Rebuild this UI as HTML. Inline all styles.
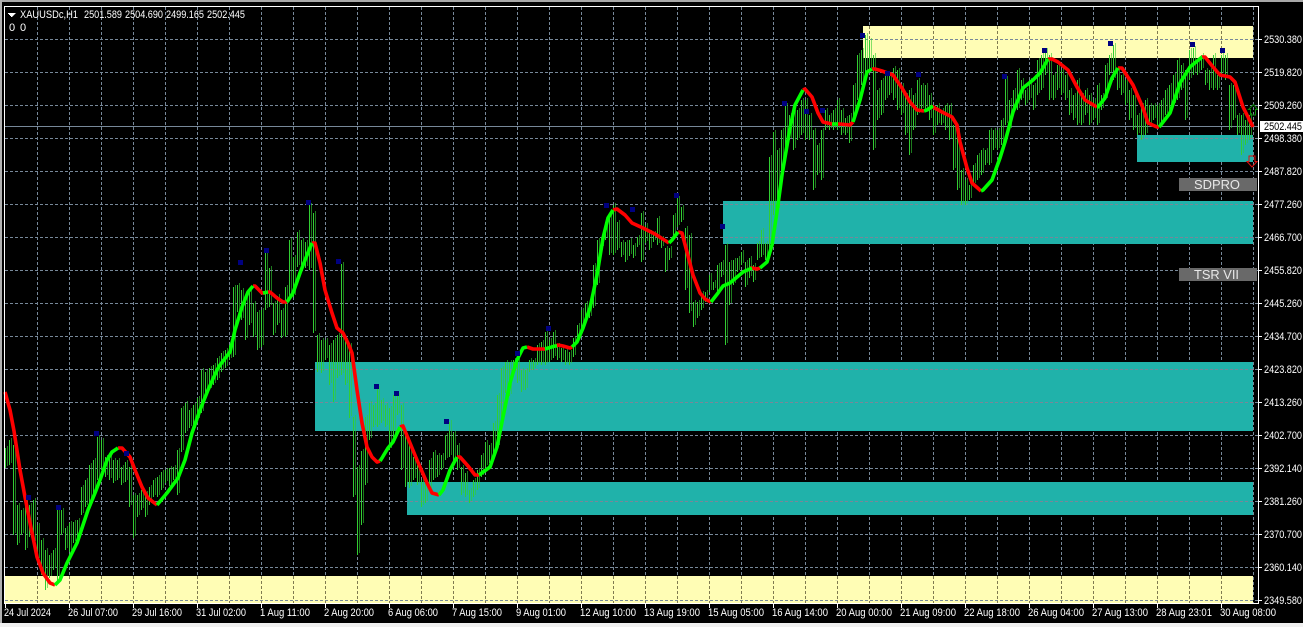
<!DOCTYPE html>
<html><head><meta charset="utf-8"><title>XAUUSDc,H1</title>
<style>
html,body{margin:0;padding:0;background:#000;width:1303px;height:627px;overflow:hidden}
svg{display:block}
text{font-family:"Liberation Sans",sans-serif;font-size:11px;fill:#fff}
</style></head><body>
<svg width="1303" height="627" viewBox="0 0 1303 627" xmlns="http://www.w3.org/2000/svg">
<rect width="1303" height="627" fill="#000"/>
<rect width="1303" height="2" fill="#a8a8a8"/>
<rect width="2" height="627" fill="#b0b0b0"/>
<rect y="623" width="1303" height="4" fill="#f0f0f0"/>

<g shape-rendering="crispEdges">
<path fill="none" stroke="#778899" stroke-dasharray="3 2" d="M37.5 7V603M69.5 7V603M101.5 7V603M133.5 7V603M165.5 7V603M197.5 7V603M229.5 7V603M261.5 7V603M293.5 7V603M325.5 7V603M357.5 7V603M389.5 7V603M421.5 7V603M453.5 7V603M485.5 7V603M517.5 7V603M549.5 7V603M581.5 7V603M613.5 7V603M645.5 7V603M677.5 7V603M709.5 7V603M741.5 7V603M773.5 7V603M805.5 7V603M837.5 7V603M869.5 7V603M901.5 7V603M933.5 7V603M965.5 7V603M997.5 7V603M1029.5 7V603M1061.5 7V603M1093.5 7V603M1125.5 7V603M1157.5 7V603M1189.5 7V603M1221.5 7V603M1253.5 7V603"/>
<rect x="315" y="362" width="938" height="69" fill="#20b2aa"/>
<rect x="407" y="482" width="846" height="33" fill="#20b2aa"/>
<rect x="723" y="201" width="530" height="43" fill="#20b2aa"/>
<rect x="1137" y="135" width="116" height="27" fill="#20b2aa"/>
<rect x="863" y="26" width="390" height="32" fill="#fffdb5"/>
<rect x="5" y="576" width="1248" height="27" fill="#fffdb5"/>
<path fill="none" stroke="#807a50" stroke-dasharray="3 2" d="M869.5 26V58M901.5 26V58M933.5 26V58M965.5 26V58M997.5 26V58M1029.5 26V58M1061.5 26V58M1093.5 26V58M1125.5 26V58M1157.5 26V58M1189.5 26V58M1221.5 26V58M37.5 576V603M69.5 576V603M101.5 576V603M133.5 576V603M165.5 576V603M197.5 576V603M229.5 576V603M261.5 576V603M293.5 576V603M325.5 576V603M357.5 576V603M389.5 576V603M421.5 576V603M453.5 576V603M485.5 576V603M517.5 576V603M549.5 576V603M581.5 576V603M613.5 576V603M645.5 576V603M677.5 576V603M709.5 576V603M741.5 576V603M773.5 576V603M805.5 576V603M837.5 576V603M869.5 576V603M901.5 576V603M933.5 576V603M965.5 576V603M997.5 576V603M1029.5 576V603M1061.5 576V603M1093.5 576V603M1125.5 576V603M1157.5 576V603M1189.5 576V603M1221.5 576V603"/>
<path fill="none" stroke="#778899" stroke-dasharray="3 2" d="M5 39.5H1258M5 72.5H1258M5 105.5H1258M5 138.5H1258M5 171.5H1258M5 204.5H1258M5 237.5H1258M5 270.5H1258M5 303.5H1258M5 336.5H1258M5 369.5H1258M5 402.5H1258M5 435.5H1258M5 468.5H1258M5 501.5H1258M5 534.5H1258M5 567.5H1258M5 600.5H1258"/>
<path fill="none" stroke="#778899" d="M5 126.5H1258"/>

<g transform="translate(.5 0)">
<path id="b" fill="none" stroke="#32cd32" d="M5 448V468M9 440V465M13 445V535M17 505V545M21 510V535M25 500V550M29 505V537M33 500V543M37 525V560M41 540V575M45 550V590M49 555V578M53 550V570M57 510V582M61 510V535M65 528V550M69 523V552M73 522V543M77 520V540M81 487V515M85 480V507M89 465V503M93 460V495M97 437V480M101 440V470M105 457V477M109 455V480M113 460V483M117 460V480M121 467V485M125 462V482M129 467V507M133 495V538M137 495V517M141 490V510M145 493V517M149 487V505M153 480V497M157 477V497M161 472V490M165 470V483M169 468V486M173 467V480M177 450V495M181 408V452M185 403V433M189 410V428M193 405V430M197 398V420M201 370V413M205 372V397M209 368V390M213 365V385M217 358V380M221 353V372M225 350V368M229 345V360M233 287V357M237 285V312M241 290V320M245 298V340M249 290V325M253 303V337M257 312V350M261 310V347M265 253V310M269 268V307M273 303V335M277 296V325M281 310V338M285 287V337M289 240V300M293 257V297M297 232V267M301 240V265M305 242V268M309 205V270M313 213V333M317 335V372M321 340V373M325 340V360M329 345V385M333 340V402M337 335V378M341 264V375M345 340V385M349 345V418M353 417V497M357 467V555M361 451V525M365 417V485M369 403V440M373 405V427M377 388V427M381 400V423M385 405V427M389 408V450M393 395V437M397 395V415M401 405V470M405 435V487M409 445V488M413 457V480M417 465V485M421 480V507M425 483V503M429 460V490M433 452V480M437 455V477M441 455V470M445 435V460M449 422V457M453 433V463M457 445V470M461 467V495M465 473V497M469 490V503M473 480V497M477 470V490M481 455V477M485 442V467M489 445V463M493 423V457M497 395V447M501 368V417M505 362V393M509 362V396M513 360V373M517 360V383M521 370V392M525 370V390M529 360V372M533 360V370M537 345V365M541 342V365M545 332V365M549 340V362M553 332V358M557 345V360M561 348V362M565 350V365M569 352V365M573 338V357M577 325V340M581 310V330M585 303V320M589 305V318M593 265V308M597 240V285M601 238V248M605 222V240M609 215V255M613 205V255M617 222V250M621 242V257M625 242V262M629 240V256M633 245V258M637 237V247M641 213V262M645 225V243M649 232V250M653 233V242M657 218V245M661 238V248M665 248V272M669 248V260M673 215V240M677 198V227M681 207V222M685 228V290M689 235V313M693 302V327M697 302V318M701 293V310M705 292V302M709 275V292M713 282V290M717 265V292M721 262V277M725 245V345M729 262V305M733 260V285M737 258V272M741 252V265M745 262V287M749 258V278M753 265V282M757 243V260M761 230V257M765 243V260M769 157V250M773 132V215M777 150V210M781 130V170M785 105V150M789 115V140M793 112V150M797 110V140M801 100V135M805 100V140M809 115V140M813 130V190M817 145V175M821 130V180M825 110V130M829 115V130M833 110V130M837 100V130M841 110V135M845 118V135M849 115V143M853 85V120M857 55V100M861 50V85M865 35V75M869 40V70M873 55V150M877 90V120M881 80V115M885 75V100M889 75V95M893 68V100M897 70V110M901 85V115M905 95V135M909 90V155M913 95V130M917 80V115M921 85V110M925 85V110M929 95V120M933 110V135M937 105V125M941 110V125M945 105V130M949 105V140M953 125V170M957 130V190M961 170V205M965 180V205M969 185V200M973 165V185M977 155V180M981 150V175M985 150V165M989 130V165M993 130V150M997 130V150M1001 120V145M1005 78V125M1009 100V130M1013 90V110M1017 70V110M1021 80V100M1025 90V105M1029 80V100M1033 85V110M1037 60V95M1041 55V90M1045 50V75M1049 55V100M1053 75V100M1057 65V90M1061 70V95M1065 75V100M1069 90V115M1073 95V120M1077 80V125M1081 95V125M1085 90V115M1089 95V125M1093 100V120M1097 85V125M1101 95V110M1105 65V100M1109 55V75M1113 45V80M1117 70V90M1121 75V95M1125 80V105M1129 90V120M1133 95V130M1137 115V135M1141 105V140M1145 100V135M1149 105V125M1153 105V120M1157 105V127M1161 100V125M1165 90V115M1169 85V115M1173 75V105M1177 60V100M1181 65V90M1185 70V120M1189 50V80M1193 48V75M1197 60V75M1201 55V70M1205 70V85M1209 70V90M1213 55V90M1217 75V90M1221 55V75M1225 55V80M1229 85V130M1233 85V120M1237 115V135M1241 115V155M1245 120V145M1249 115V140"/>
<use href="#b" x="2" y="-2" opacity=".6"/>
</g>
</g>

<g fill="none" stroke-width="3.6" stroke-linejoin="round" stroke-linecap="butt">
<g stroke="#ff0000">
<polyline points="5,392 10,410 14,431 20,470 25,497 31,528 35,547 37,557 43,573 50,583 55,585"/>
<polyline points="118,448 122,448 130,457 135,470 142,487 148,498 157,505"/>
<polyline points="253,286 255,286 262,293 265,293"/>
<polyline points="268,292 270,292 277,298 283,302 287,302"/>
<polyline points="312,243 315,243 320,263 325,290 332,313 337,328 343,333 348,343 352,353 357,390 362,423 367,447 372,457 377,462 380,461"/>
<polyline points="400,427 403,426 410,443 417,460 427,483 432,493 439,495"/>
<polyline points="457,457 460,457 468,466 475,475 479,475"/>
<polyline points="527,347 533,349 545,349"/>
<polyline points="556,346 558,345 563,346 570,348 572,347"/>
<polyline points="613,210 617,209 625,215 632,223 643,228 655,234 669,243"/>
<polyline points="678,232 682,233 687,252 693,275 700,293 705,299 711,302"/>
<polyline points="750,268 752,268 757,269 760,268"/>
<polyline points="803,90 805,89 812,97 818,113 823,122 832,124 834,124"/>
<polyline points="838,124 840,124 850,125 853,122"/>
<polyline points="872,69 875,69 882,71 893,75 902,88 910,102 917,110 924,111"/>
<polyline points="932,106 933,107 942,112 952,117 957,125 960,142 967,168 972,183 981,191"/>
<polyline points="1048,59 1052,59 1058,62 1068,70 1077,87 1085,100 1097,107"/>
<polyline points="1118,68 1122,68 1133,85 1143,108 1148,123 1157,127 1159,127"/>
<polyline points="1202,57 1205,57 1213,67 1220,75 1230,77 1235,82 1243,107 1253,127"/>
</g>
<g stroke="#00ff00">
<polyline points="55,585 60,580 67,563 77,543 88,510 95,493 100,480 107,460 112,452 118,448"/>
<polyline points="157,505 167,493 178,478 185,460 192,433 200,410 208,390 217,370 220,365 230,352 235,330 242,307 248,292 253,286"/>
<polyline points="263,293 268,292"/>
<polyline points="287,302 293,293 300,273 307,255 312,243"/>
<polyline points="380,461 382,458 388,448 393,442 400,427"/>
<polyline points="439,495 443,490 450,470 457,457"/>
<polyline points="479,475 490,467 497,447 503,417 510,383 517,360 523,348 527,347"/>
<polyline points="545,349 555,346 557,346"/>
<polyline points="572,347 577,342 583,328 590,308 597,275 603,238 608,218 613,210"/>
<polyline points="669,243 672,240 678,232"/>
<polyline points="711,302 718,293 723,286 730,283 743,272 752,268"/>
<polyline points="760,268 767,262 772,245 775,225 777,212 782,175 790,128 795,105 803,90"/>
<polyline points="832,124 838,124"/>
<polyline points="853,122 860,100 867,72 872,69"/>
<polyline points="924,111 927,110 933,106"/>
<polyline points="981,191 983,190 992,180 1000,158 1005,142 1013,112 1023,88 1033,80 1040,73 1048,59"/>
<polyline points="1097,107 1098,107 1105,98 1112,78 1118,68"/>
<polyline points="1159,127 1160,126 1170,113 1180,83 1190,67 1202,57"/>
</g>
</g>

<g fill="#000080" shape-rendering="crispEdges">
<rect x="26" y="495" width="5" height="5"/><rect x="56" y="505" width="5" height="5"/><rect x="94" y="431" width="5" height="5"/><rect x="124" y="451" width="5" height="5"/>
<rect x="238" y="260" width="5" height="5"/><rect x="264" y="248" width="5" height="5"/><rect x="306" y="200" width="5" height="5"/><rect x="336" y="259" width="5" height="5"/>
<rect x="374" y="384" width="5" height="5"/><rect x="394" y="391" width="5" height="5"/><rect x="444" y="419" width="5" height="5"/><rect x="515" y="351" width="5" height="5"/>
<rect x="546" y="326" width="5" height="5"/><rect x="604" y="203" width="5" height="5"/><rect x="630" y="207" width="5" height="5"/><rect x="674" y="193" width="5" height="5"/><rect x="720" y="224" width="5" height="5"/>
<rect x="782" y="101" width="5" height="5"/><rect x="804" y="109" width="5" height="5"/><rect x="820" y="108" width="5" height="5"/><rect x="860" y="33" width="5" height="5"/><rect x="885" y="71" width="5" height="5"/><rect x="916" y="72" width="5" height="5"/><rect x="1002" y="74" width="5" height="5"/>
<rect x="1042" y="48" width="5" height="5"/><rect x="1108" y="41" width="5" height="5"/><rect x="1190" y="42" width="5" height="5"/><rect x="1220" y="48" width="5" height="5"/>
</g>

<path d="M1253.5 104.5L1257.5 109.5H1255.5V115H1250.5V109.5H1248.5Z" fill="none" stroke="#0a8a0a"/>
<path d="M1252 167L1257 161.5H1255V156H1249V161.5H1247Z" fill="none" stroke="#e01010"/>

<g shape-rendering="crispEdges">
<path fill="none" stroke="#fff" d="M4 6.5H1258.5V603.5H4.5V6M1258 39.5H1262M1258 72.5H1262M1258 105.5H1262M1258 138.5H1262M1258 171.5H1262M1258 204.5H1262M1258 237.5H1262M1258 270.5H1262M1258 303.5H1262M1258 336.5H1262M1258 369.5H1262M1258 402.5H1262M1258 435.5H1262M1258 468.5H1262M1258 501.5H1262M1258 534.5H1262M1258 567.5H1262M1258 600.5H1262M5.5 604V608M69.5 604V608M133.5 604V608M197.5 604V608M261.5 604V608M325.5 604V608M389.5 604V608M453.5 604V608M517.5 604V608M581.5 604V608M645.5 604V608M709.5 604V608M773.5 604V608M837.5 604V608M901.5 604V608M965.5 604V608M1029.5 604V608M1093.5 604V608M1157.5 604V608M1221.5 604V608"/>
<rect x="1260" y="121" width="43" height="11" fill="#fff"/>
<rect x="1179" y="178" width="78" height="13" fill="#696969"/>
<rect x="1179" y="268" width="78" height="13" fill="#696969"/>
<path d="M8 13H15.5V14H14.5V15H13.5V16H12.5V17H11V16H10V15H9V14H8Z" fill="#fff"/>
</g>

<text x="20" y="18" textLength="58" lengthAdjust="spacingAndGlyphs">XAUUSDc,H1</text>
<text x="84" y="18" textLength="38" lengthAdjust="spacingAndGlyphs">2501.589</text>
<text x="125" y="18" textLength="38" lengthAdjust="spacingAndGlyphs">2504.690</text>
<text x="166" y="18" textLength="38" lengthAdjust="spacingAndGlyphs">2499.165</text>
<text x="207" y="18" textLength="38" lengthAdjust="spacingAndGlyphs">2502.445</text>
<text x="9" y="31">0</text><text x="20" y="31">0</text>

<g>
<text x="1264" y="43" textLength="38" lengthAdjust="spacingAndGlyphs">2530.380</text>
<text x="1264" y="76" textLength="38" lengthAdjust="spacingAndGlyphs">2519.820</text>
<text x="1264" y="109" textLength="38" lengthAdjust="spacingAndGlyphs">2509.260</text>
<text x="1264" y="130" textLength="38" lengthAdjust="spacingAndGlyphs" style="fill:#000">2502.445</text>
<text x="1264" y="142" textLength="38" lengthAdjust="spacingAndGlyphs">2498.380</text>
<text x="1264" y="175" textLength="38" lengthAdjust="spacingAndGlyphs">2487.820</text>
<text x="1264" y="208" textLength="38" lengthAdjust="spacingAndGlyphs">2477.260</text>
<text x="1264" y="241" textLength="38" lengthAdjust="spacingAndGlyphs">2466.700</text>
<text x="1264" y="274" textLength="38" lengthAdjust="spacingAndGlyphs">2455.820</text>
<text x="1264" y="307" textLength="38" lengthAdjust="spacingAndGlyphs">2445.260</text>
<text x="1264" y="340" textLength="38" lengthAdjust="spacingAndGlyphs">2434.700</text>
<text x="1264" y="373" textLength="38" lengthAdjust="spacingAndGlyphs">2423.820</text>
<text x="1264" y="406" textLength="38" lengthAdjust="spacingAndGlyphs">2413.260</text>
<text x="1264" y="439" textLength="38" lengthAdjust="spacingAndGlyphs">2402.700</text>
<text x="1264" y="472" textLength="38" lengthAdjust="spacingAndGlyphs">2392.140</text>
<text x="1264" y="505" textLength="38" lengthAdjust="spacingAndGlyphs">2381.260</text>
<text x="1264" y="538" textLength="38" lengthAdjust="spacingAndGlyphs">2370.700</text>
<text x="1264" y="571" textLength="38" lengthAdjust="spacingAndGlyphs">2360.140</text>
<text x="1264" y="604" textLength="38" lengthAdjust="spacingAndGlyphs">2349.580</text>
</g>

<g>
<text x="4" y="616" textLength="47" lengthAdjust="spacingAndGlyphs">24 Jul 2024</text>
<text x="68" y="616" textLength="50" lengthAdjust="spacingAndGlyphs">26 Jul 07:00</text>
<text x="132" y="616" textLength="50" lengthAdjust="spacingAndGlyphs">29 Jul 16:00</text>
<text x="196" y="616" textLength="50" lengthAdjust="spacingAndGlyphs">31 Jul 02:00</text>
<text x="260" y="616" textLength="50" lengthAdjust="spacingAndGlyphs">1 Aug 11:00</text>
<text x="324" y="616" textLength="50" lengthAdjust="spacingAndGlyphs">2 Aug 20:00</text>
<text x="388" y="616" textLength="50" lengthAdjust="spacingAndGlyphs">6 Aug 06:00</text>
<text x="452" y="616" textLength="50" lengthAdjust="spacingAndGlyphs">7 Aug 15:00</text>
<text x="516" y="616" textLength="50" lengthAdjust="spacingAndGlyphs">9 Aug 01:00</text>
<text x="580" y="616" textLength="56" lengthAdjust="spacingAndGlyphs">12 Aug 10:00</text>
<text x="644" y="616" textLength="56" lengthAdjust="spacingAndGlyphs">13 Aug 19:00</text>
<text x="708" y="616" textLength="56" lengthAdjust="spacingAndGlyphs">15 Aug 05:00</text>
<text x="772" y="616" textLength="56" lengthAdjust="spacingAndGlyphs">16 Aug 14:00</text>
<text x="836" y="616" textLength="56" lengthAdjust="spacingAndGlyphs">20 Aug 00:00</text>
<text x="900" y="616" textLength="56" lengthAdjust="spacingAndGlyphs">21 Aug 09:00</text>
<text x="964" y="616" textLength="56" lengthAdjust="spacingAndGlyphs">22 Aug 18:00</text>
<text x="1028" y="616" textLength="56" lengthAdjust="spacingAndGlyphs">26 Aug 04:00</text>
<text x="1092" y="616" textLength="56" lengthAdjust="spacingAndGlyphs">27 Aug 13:00</text>
<text x="1156" y="616" textLength="56" lengthAdjust="spacingAndGlyphs">28 Aug 23:01</text>
<text x="1220" y="616" textLength="56" lengthAdjust="spacingAndGlyphs">30 Aug 08:00</text>
</g>

<text x="1194" y="189" textLength="46" lengthAdjust="spacingAndGlyphs" style="font-size:13px;fill:#e8e8e8">SDPRO</text>
<text x="1194" y="279" textLength="45" lengthAdjust="spacingAndGlyphs" style="font-size:13px;fill:#e8e8e8">TSR VII</text>
</svg>
</body></html>
